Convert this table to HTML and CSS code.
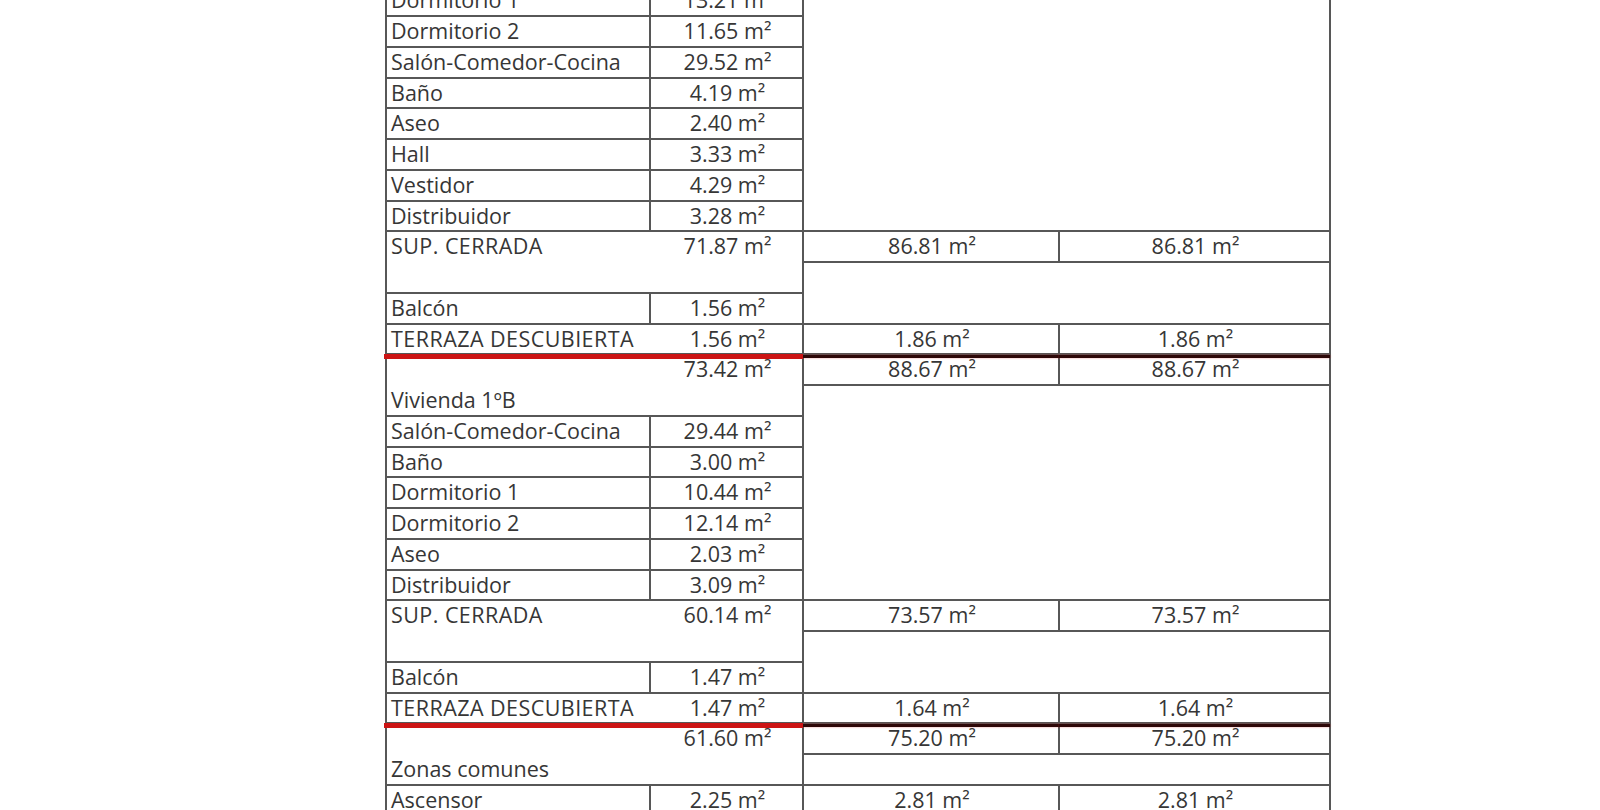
FILE: index.html
```html
<!DOCTYPE html>
<html lang="es">
<head>
<meta charset="utf-8">
<title>Superficies</title>
<link rel="stylesheet" href="styles.css">
</head>
<body>
<div class="sheet">
  <div class="grid">
    <div class="cell lbl">Dormitorio 1</div><div class="cell val">13.21 m²</div><div class="cell blank h8"></div>
    <div class="cell lbl">Dormitorio 2</div><div class="cell val">11.65 m²</div>
    <div class="cell lbl">Salón-Comedor-Cocina</div><div class="cell val">29.52 m²</div>
    <div class="cell lbl">Baño</div><div class="cell val">4.19 m²</div>
    <div class="cell lbl">Aseo</div><div class="cell val">2.40 m²</div>
    <div class="cell lbl">Hall</div><div class="cell val">3.33 m²</div>
    <div class="cell lbl">Vestidor</div><div class="cell val">4.29 m²</div>
    <div class="cell lbl">Distribuidor</div><div class="cell val">3.28 m²</div>

    <div class="cell wide sup"><span class="wl caps">SUP. CERRADA</span><span class="wv">71.87 m²</span></div><div class="cell val">86.81 m²</div><div class="cell val">86.81 m²</div>
    <div class="cell blank h2"></div>
    <div class="cell lbl">Balcón</div><div class="cell val">1.56 m²</div>
    <div class="cell wide terr red"><span class="wl caps">TERRAZA DESCUBIERTA</span><span class="wv">1.56 m²</span></div><div class="cell val dark">1.86 m²</div><div class="cell val dark">1.86 m²</div>
    <div class="cell wide tot"><span class="wl"></span><span class="wv">73.42 m²</span><span class="wl head">Vivienda 1ºB</span></div><div class="cell val">88.67 m²</div><div class="cell val">88.67 m²</div>
    <div class="cell blank h7"></div>
    <div class="cell lbl">Salón-Comedor-Cocina</div><div class="cell val">29.44 m²</div>
    <div class="cell lbl">Baño</div><div class="cell val">3.00 m²</div>
    <div class="cell lbl">Dormitorio 1</div><div class="cell val">10.44 m²</div>
    <div class="cell lbl">Dormitorio 2</div><div class="cell val">12.14 m²</div>
    <div class="cell lbl">Aseo</div><div class="cell val">2.03 m²</div>
    <div class="cell lbl">Distribuidor</div><div class="cell val">3.09 m²</div>

    <div class="cell wide sup"><span class="wl caps">SUP. CERRADA</span><span class="wv">60.14 m²</span></div><div class="cell val">73.57 m²</div><div class="cell val">73.57 m²</div>
    <div class="cell blank h2"></div>
    <div class="cell lbl">Balcón</div><div class="cell val">1.47 m²</div>
    <div class="cell wide terr red"><span class="wl caps">TERRAZA DESCUBIERTA</span><span class="wv">1.47 m²</span></div><div class="cell val dark">1.64 m²</div><div class="cell val dark">1.64 m²</div>
    <div class="cell wide tot"><span class="wl"></span><span class="wv">61.60 m²</span><span class="wl head">Zonas comunes</span></div><div class="cell val">75.20 m²</div><div class="cell val">75.20 m²</div>
    <div class="cell blank h1"></div>
    <div class="cell lbl">Ascensor</div><div class="cell val">2.25 m²</div><div class="cell val">2.81 m²</div><div class="cell val">2.81 m²</div>
  </div>
</div>
</body>
</html>
```

FILE: styles.css
```css
html, body {
  margin: 0;
  padding: 0;
  background: #ffffff;
}

body {
  font-family: "Open Sans", "DejaVu Sans", sans-serif;
  font-size: 21.5px;
  color: #363636;
  overflow: hidden;
  height: 810px;
}

.sheet {
  width: 1600px;
  height: 810px;
  overflow: hidden;
}

.grid {
  display: grid;
  grid-template-columns: 262px 151px 254px 269px;
  grid-auto-rows: 28.75px;
  gap: 2px;
  padding: 2px;
  background: #575757;
  width: max-content;
  margin-left: 385px;
  margin-top: -15.75px;
}

.cell {
  background: #ffffff;
  line-height: 28.75px;
  white-space: nowrap;
  position: relative;
}

.lbl {
  padding-left: 4px;
}

.val {
  text-align: center;
  padding-left: 2px;
}

.blank {
  grid-column: span 2;
}

.h1 { grid-row: span 1; }
.h2 { grid-row: span 2; }
.h7 { grid-row: span 7; }
.h8 { grid-row: span 8; }

.wide {
  grid-column: span 2;
  display: grid;
  grid-template-columns: 264px 151px;
  grid-auto-rows: 28.75px;
  row-gap: 2px;
}

.sup, .tot {
  grid-row: span 2;
}

.wl {
  padding-left: 4px;
}

.caps {
  letter-spacing: 0.45px;
}

.wv {
  text-align: center;
  padding-left: 2px;
}

.red::after {
  content: "";
  position: absolute;
  z-index: 2;
  left: -3px;
  right: -1px;
  bottom: -5.5px;
  height: 4.5px;
  background: #cc1414;
}

.dark::after {
  content: "";
  position: absolute;
  z-index: 2;
  left: -1px;
  right: -1px;
  bottom: -5px;
  height: 3.5px;
  background: #2e0808;
  box-shadow: 0 0 2px rgba(210, 30, 30, 0.55);
}
```
